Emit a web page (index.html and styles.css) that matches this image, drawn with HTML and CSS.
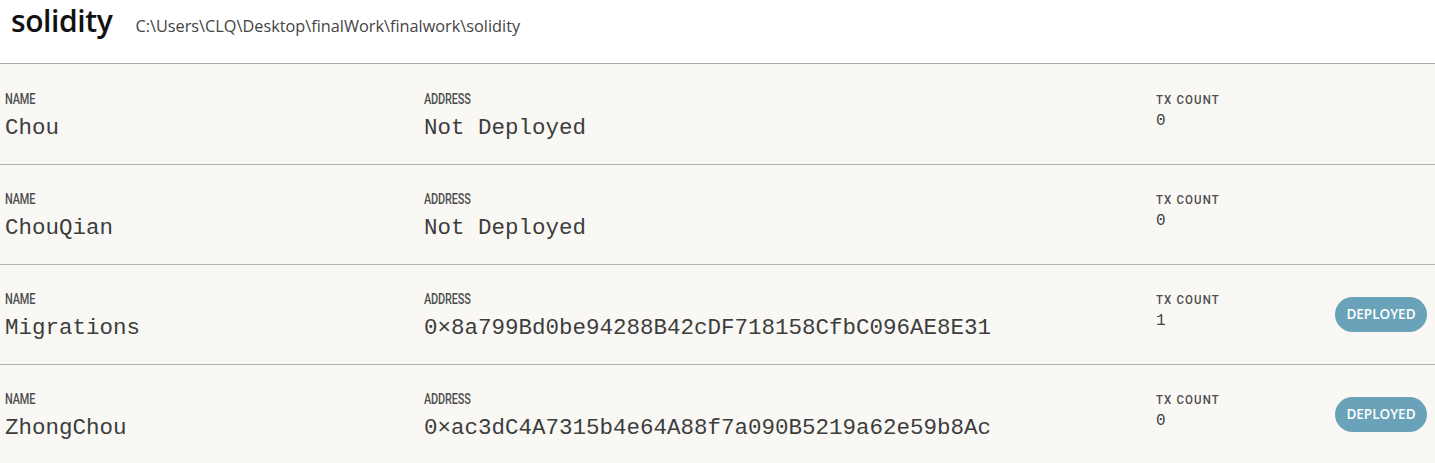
FILE: index.html
```html
<!DOCTYPE html>
<html>
<head>
<meta charset="utf-8">
<link rel="stylesheet" href="styles.css">
</head>
<body>
<header class="top">
  <h1 class="title">solidity</h1>
  <span class="path">C:\Users\CLQ\Desktop\finalWork\finalwork\solidity</span>
</header>
<main class="list">
  <div class="row">
    <div class="col name"><div class="label">NAME</div><div class="value">Chou</div></div>
    <div class="col addr"><div class="label">ADDRESS</div><div class="value">Not Deployed</div></div>
    <div class="col tx"><div class="txlabel">TX COUNT</div><div class="txvalue">0</div></div>
    <div class="col badgecol"></div>
  </div>
  <div class="row">
    <div class="col name"><div class="label">NAME</div><div class="value">ChouQian</div></div>
    <div class="col addr"><div class="label">ADDRESS</div><div class="value">Not Deployed</div></div>
    <div class="col tx"><div class="txlabel">TX COUNT</div><div class="txvalue">0</div></div>
    <div class="col badgecol"></div>
  </div>
  <div class="row">
    <div class="col name"><div class="label">NAME</div><div class="value">Migrations</div></div>
    <div class="col addr"><div class="label">ADDRESS</div><div class="value">0×8a799Bd0be94288B42cDF718158CfbC096AE8E31</div></div>
    <div class="col tx"><div class="txlabel">TX COUNT</div><div class="txvalue">1</div></div>
    <div class="col badgecol"><span class="badge">DEPLOYED</span></div>
  </div>
  <div class="row">
    <div class="col name"><div class="label">NAME</div><div class="value">ZhongChou</div></div>
    <div class="col addr"><div class="label">ADDRESS</div><div class="value">0×ac3dC4A7315b4e64A88f7a090B5219a62e59b8Ac</div></div>
    <div class="col tx"><div class="txlabel">TX COUNT</div><div class="txvalue">0</div></div>
    <div class="col badgecol"><span class="badge">DEPLOYED</span></div>
  </div>
</main>
</body>
</html>
```
FILE: styles.css
```css
html, body {
  margin: 0;
  padding: 0;
  background: #f9f8f5;
}
body {
  font-family: "Open Sans", "Noto Sans", sans-serif;
  color: #222;
}
.top {
  background: #ffffff;
  border-bottom: 1px solid #a9a9a9;
  display: flex;
  align-items: baseline;
  padding-left: 11px;
  box-sizing: border-box;
  height: 64px;
}
.title {
  margin: 0;
  font-size: 30px;
  line-height: 41px;
  font-weight: 600;
  color: #111;
  letter-spacing: -0.4px;
}
.path {
  font-size: 16.3px;
  color: #444;
  margin-left: 23px;
}
.list {
  padding-top: 1px;
}
.row {
  display: flex;
  height: 100px;
  border-bottom: 1px solid #b3b3b3;
  padding-top: 22px;
  box-sizing: border-box;
  background: #f9f8f5;
}
.row:last-child {
  border-bottom: none;
}
.col.name { width: 419px; padding-left: 5px; }
.col.addr { width: 732px; }
.col.tx { width: 179px; }
.col.badgecol { flex: 1; display: flex; align-items: flex-start; }
.label {
  font-family: Roboto, "Liberation Sans", sans-serif;
  font-size: 14px;
  font-weight: 500;
  color: #4d4d4d;
  line-height: 16px;
  display: inline-block;
  transform: scaleX(0.78);
  transform-origin: left;
  letter-spacing: -0.2px;
}
.value {
  font-family: "Liberation Mono", "DejaVu Sans Mono", monospace;
  font-size: 22.5px;
  color: #3d3d3d;
  line-height: 28px;
  margin-top: 5px;
}
.txlabel {
  font-family: Roboto, "Liberation Sans", sans-serif;
  font-size: 13px;
  font-weight: 500;
  color: #4d4d4d;
  letter-spacing: 1.3px;
  line-height: 16px;
  margin-top: -2px;
  display: inline-block;
  transform: scaleX(0.88);
  transform-origin: left;
  white-space: nowrap;
}
.txvalue {
  font-family: "Liberation Mono", "DejaVu Sans Mono", monospace;
  font-size: 16px;
  color: #444;
  line-height: 20px;
  margin-top: 2px;
}
.badge {
  display: inline-block;
  margin-top: 10px;
  background: #6aa3b9;
  color: #fff;
  font-family: "Open Sans", sans-serif;
  font-weight: 600;
  font-size: 13.5px;
  height: 35px;
  line-height: 35px;
  width: 92px;
  text-align: center;
  border-radius: 18px;
}
```
